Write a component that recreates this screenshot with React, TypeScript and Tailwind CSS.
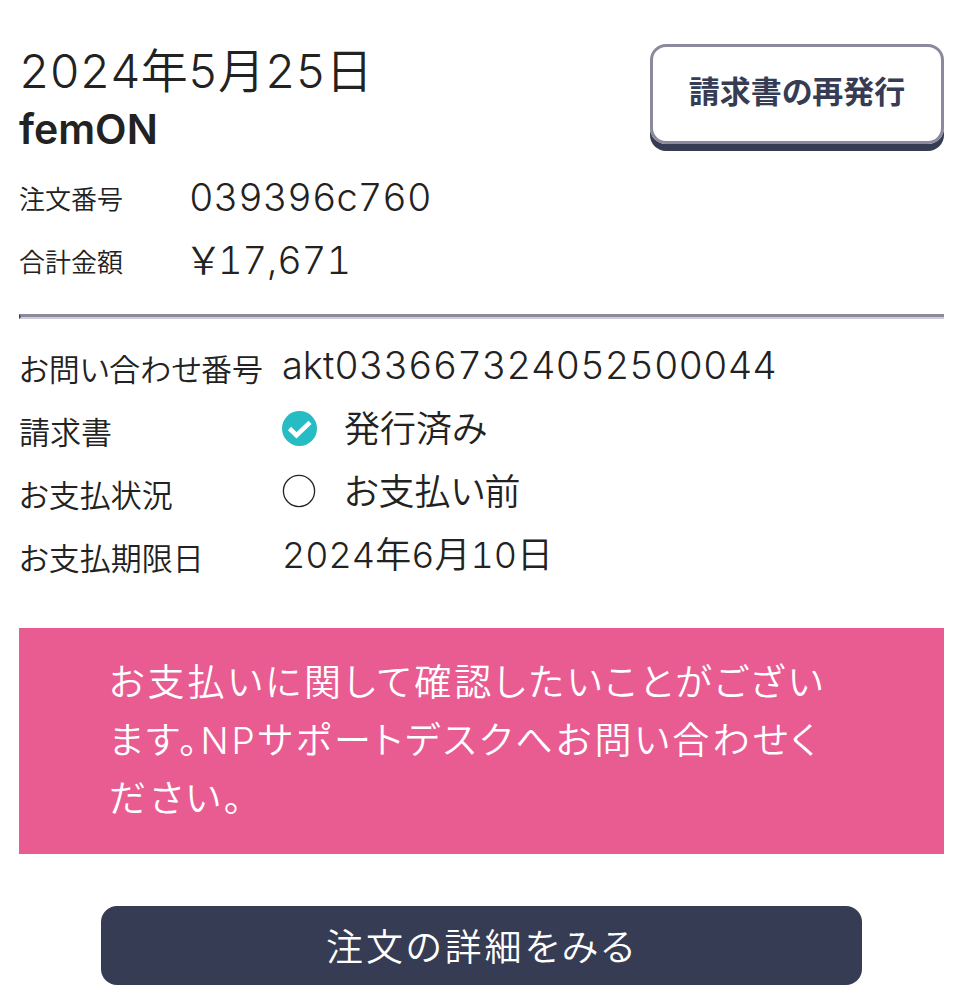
const summary = [
  { label: '注文番号', value: '039396c760' },
  { label: '合計金額', value: '￥17,671' },
];

const details = [
  { label: 'お問い合わせ番号', value: 'akt033667324052500044', size: 'text-[38px]' },
  { label: '請求書', value: '発行済み', size: 'text-[36px]', icon: 'done' },
  { label: 'お支払状況', value: 'お支払い前', size: 'text-[36px]', icon: 'empty' },
  { label: 'お支払期限日', value: '2024年6月10日', size: 'text-[36px]' },
];

function StatusIcon({ type }: { type: string }) {
  return (
    <svg viewBox="0 0 36 36" className="mr-[26px] size-9 shrink-0" fill="none" aria-hidden="true">
      {type === 'done' ? (
        <>
          <circle cx="17.5" cy="17.5" r="17.5" fill="#26bcc4" />
          <path d="M7.5 17.5 14.5 24.3 28 11.3" stroke="#ffffff" strokeWidth="4.6" />
        </>
      ) : (
        <circle cx="17" cy="17" r="15.6" stroke="#222222" strokeWidth="1.3" />
      )}
    </svg>
  );
}

export default function App() {
  return (
    <main className="bg-white pt-11 pr-[27px] pb-3.5 pl-[19px] font-['Inter','Noto_Sans_CJK_JP',sans-serif] font-[350] text-[#222222] tabular-nums [font-feature-settings:'palt']">
      <header className="flex items-start justify-between">
        <div>
          <p className="text-[47px] leading-[54px]">2024年5月25日</p>
          <h1 className="text-[41px] leading-[62px] font-semibold">femON</h1>
        </div>
        <button
          type="button"
          className="h-[100px] w-[294px] rounded-2xl border-[3px] border-[#8b899c] pb-1 text-[31px] font-bold text-[#363c53] shadow-[0_7px_0_#363c53]"
        >
          請求書の再発行
        </button>
      </header>

      <dl className="mt-1.5">
        {summary.map((row) => (
          <div key={row.label} className="flex h-[63px] items-center">
            <dt className="w-[170px] pt-1 text-[26px]">{row.label}</dt>
            <dd className="text-[38px]">{row.value}</dd>
          </div>
        ))}
      </dl>

      <hr className="mt-[22px] border-t-[3px] border-b-2 border-l-2 border-t-[#8b899c] border-b-[#cfcdd8] border-l-[#363c53]" />

      <dl className="mt-[15px]">
        {details.map((row) => (
          <div key={row.label} className="flex h-[63px] items-center">
            <dt className="w-[263px] pt-2.5 text-[31px]">{row.label}</dt>
            <dd className={`flex items-center ${row.size}`}>
              {row.icon && <StatusIcon type={row.icon} />}
              {row.value}
            </dd>
          </div>
        ))}
      </dl>

      <p className="mt-[42px] bg-[#e95c92] px-[90px] py-[26px] text-[37px] leading-[58px] tracking-[3px] text-white">
        お支払いに関して確認したいことがございます。NPサポートデスクへお問い合わせください。
      </p>

      <div className="mt-[52px] px-[82px]">
        <button type="button" className="h-[79px] w-full rounded-2xl bg-[#363c53] pt-1 text-[37px] tracking-[3px] text-white">
          注文の詳細をみる
        </button>
      </div>
    </main>
  );
}
